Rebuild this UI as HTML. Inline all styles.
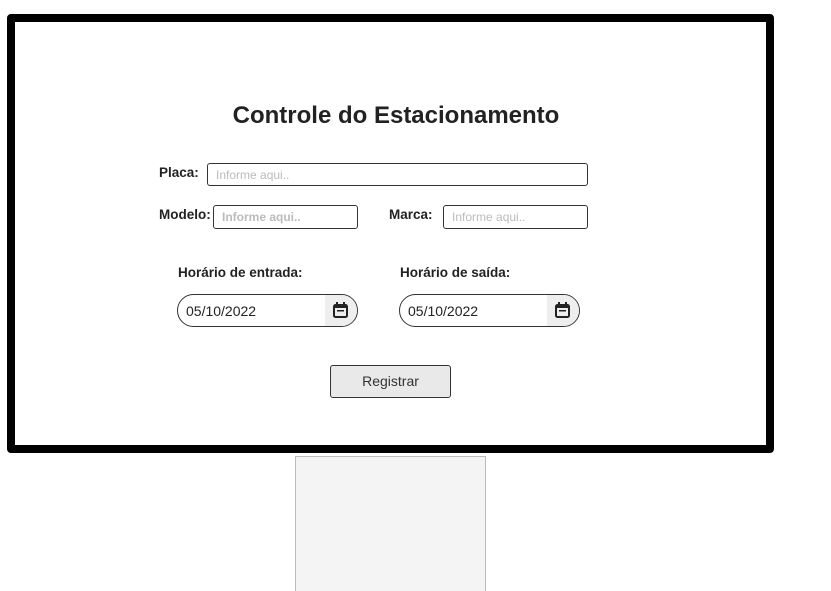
<!DOCTYPE html>
<html><head><style>
html,body{margin:0;width:831px;height:591px;overflow:hidden}
body{background:#fff;position:relative;font-family:"Liberation Sans",Arial,sans-serif}
.a{position:absolute}
.frame{left:7px;top:14px;width:751px;height:423px;border:8px solid #000;border-radius:4px;background:#fff}
.stand{left:295px;top:456px;width:189px;height:135px;background:#f4f4f4;border:1px solid #bbb;border-bottom:none}
h1{position:absolute;left:0;width:792px;text-align:center;top:102px;margin:0;font-size:24px;font-weight:bold;color:#222}
.lbl{font-size:13.5px;font-weight:bold;color:#222}
.in{border:1px solid #333;border-radius:3px;box-sizing:border-box;font-size:12px;color:#bbb;padding:4px 0 0 8px}
.date{border:1px solid #333;border-radius:17px;box-sizing:border-box;overflow:hidden;font-size:14px;color:#222}
.date span{position:absolute;left:8px;top:8px}
.date i{position:absolute;right:0;top:0;width:32px;height:100%;background:#eee}
.btn{left:330px;top:365px;width:121px;height:33px;box-sizing:border-box;border:1px solid #333;border-radius:3px;background:#e9e9e9;font-size:14px;color:#333;text-align:center;line-height:31px}
</style></head><body>
<div class="a frame"></div>
<div class="a stand"></div>
<h1>Controle do Estacionamento</h1>
<div class="a lbl" style="left:159px;top:165px">Placa:</div>
<div class="a in" style="left:207px;top:163px;width:381px;height:23px">Informe aqui..</div>
<div class="a lbl" style="left:159px;top:207px">Modelo:</div>
<div class="a in" style="left:213px;top:205px;width:145px;height:24px;font-weight:bold">Informe aqui..</div>
<div class="a lbl" style="left:389px;top:207px">Marca:</div>
<div class="a in" style="left:443px;top:205px;width:145px;height:24px">Informe aqui..</div>
<div class="a lbl" style="left:178px;top:265px">Horário de entrada:</div>
<div class="a lbl" style="left:400px;top:265px">Horário de saída:</div>
<div class="a date" style="left:177px;top:294px;width:181px;height:33px"><span>05/10/2022</span><i><svg width="32" height="31" viewBox="0 0 32 31"><rect x="9" y="10" width="13" height="12" rx="1.5" fill="none" stroke="#222" stroke-width="2"/><rect x="9" y="10" width="13" height="3" fill="#222"/><rect x="11" y="7" width="2" height="4" fill="#222"/><rect x="18" y="7" width="2" height="4" fill="#222"/><rect x="12" y="15" width="7" height="1.5" fill="#222"/></svg></i></div>
<div class="a date" style="left:399px;top:294px;width:181px;height:33px"><span>05/10/2022</span><i><svg width="32" height="31" viewBox="0 0 32 31"><rect x="9" y="10" width="13" height="12" rx="1.5" fill="none" stroke="#222" stroke-width="2"/><rect x="9" y="10" width="13" height="3" fill="#222"/><rect x="11" y="7" width="2" height="4" fill="#222"/><rect x="18" y="7" width="2" height="4" fill="#222"/><rect x="12" y="15" width="7" height="1.5" fill="#222"/></svg></i></div>
<div class="a btn">Registrar</div>
</body></html>
